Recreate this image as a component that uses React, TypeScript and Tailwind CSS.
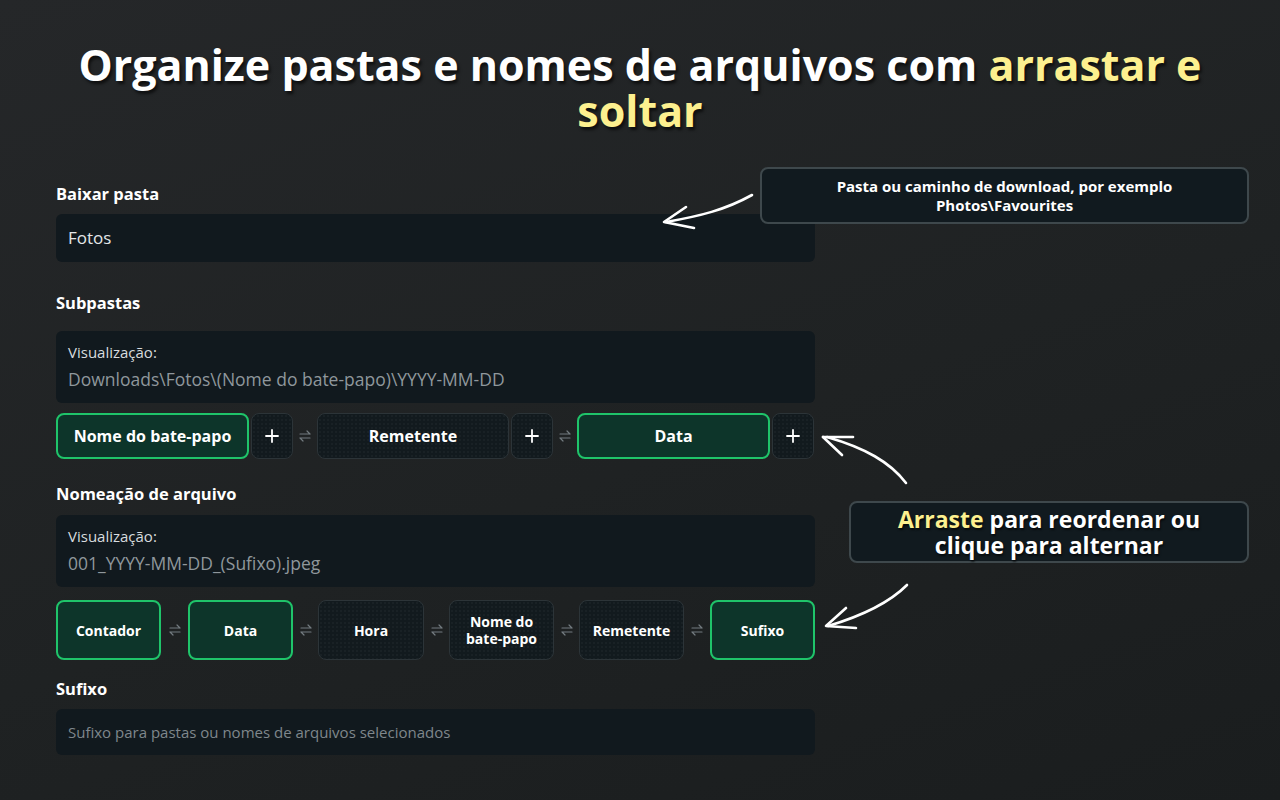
import React from "react"

const font = { fontFamily: '"Open Sans", "Noto Sans", sans-serif' }

const Swap = () => (
    <svg width="12" height="14" viewBox="0 0 12 14" fill="none" stroke="#737b80" strokeWidth="1.2" strokeLinecap="round" strokeLinejoin="round">
        <path d="M1 5h10M8 2l3 3" />
        <path d="M11 9H1M4 12L1 9" />
    </svg>
)

const Chip = ({ label, on, w, h }: { label: React.ReactNode; on?: boolean; w: string; h: string }) => (
    <div
        className={
            on
                ? `${w} ${h} flex items-center justify-center rounded-lg border-2 border-[#1fc46a] bg-[#0d352a] text-white font-bold text-center leading-[17px]`
                : `${w} ${h} flex items-center justify-center rounded-lg border border-[#2c3438] bg-[#121a1e] bg-[radial-gradient(#ffffff08_1px,transparent_1px)] bg-[size:4px_4px] text-white font-bold text-center leading-[17px]`
        }
    >
        {label}
    </div>
)

const Plus = () => (
    <div className="w-[42px] h-[46px] flex items-center justify-center rounded-lg border border-[#2c3438] bg-[#121a1e] bg-[radial-gradient(#ffffff08_1px,transparent_1px)] bg-[size:4px_4px]">
        <svg width="16" height="16" viewBox="0 0 16 16" stroke="white" strokeWidth="1.8" strokeLinecap="round">
            <path d="M8 2v12M2 8h12" />
        </svg>
    </div>
)

const Label = ({ children }: { children: React.ReactNode }) => (
    <div className="text-[16.5px] font-bold text-white leading-[22px]">{children}</div>
)

const Preview = ({ value }: { value: string }) => (
    <div className="rounded-md bg-[#11191e] px-3 pt-[10px] pb-[12px]">
        <div className="text-[15px] text-[#d8dcdf] leading-[22px]">Visualização:</div>
        <div className="text-[17.5px] text-[#8f979c] leading-[24px] mt-[4px]">{value}</div>
    </div>
)

export default function App() {
    return (
        <div
            className="relative w-[1280px] h-[800px] overflow-hidden bg-[linear-gradient(160deg,#252729_0%,#1f2223_55%,#1a1d1e_100%)]"
            style={font}
        >
            <h1 className="pt-[42px] text-center text-[43px] font-bold leading-[46px] text-white [text-shadow:2px_3px_3px_rgba(0,0,0,0.6)]">
                Organize pastas e nomes de arquivos com <span className="text-[#fdf08f]">arrastar e</span>
                <br />
                <span className="text-[#fdf08f]">soltar</span>
            </h1>

            <div className="ml-[56px] w-[759px] mt-[49px]">
                <Label>Baixar pasta</Label>
                <div className="mt-[9px] h-[48px] rounded-md bg-[#11191e] px-3 flex items-center text-[17px] text-[#e4e7e9]">
                    Fotos
                </div>

                <div className="mt-[30px]">
                    <Label>Subpastas</Label>
                </div>
                <div className="mt-[17px]">
                    <Preview value="Downloads\Fotos\(Nome do bate-papo)\YYYY-MM-DD" />
                </div>
                <div className="mt-[10px] flex items-center">
                    <Chip label="Nome do bate-papo" on w="w-[193px]" h="h-[46px]" />
                    <div className="ml-[2px]"><Plus /></div>
                    <div className="w-[24px] flex justify-center"><Swap /></div>
                    <Chip label="Remetente" w="w-[192px]" h="h-[46px]" />
                    <div className="ml-[2px]"><Plus /></div>
                    <div className="w-[24px] flex justify-center"><Swap /></div>
                    <Chip label="Data" on w="w-[193px]" h="h-[46px]" />
                    <div className="ml-[2px]"><Plus /></div>
                </div>

                <div className="mt-[24px]">
                    <Label>Nomeação de arquivo</Label>
                </div>
                <div className="mt-[10px]">
                    <Preview value="001_YYYY-MM-DD_(Sufixo).jpeg" />
                </div>
                <div className="mt-[13px] flex items-center text-[14px]">
                    <Chip label="Contador" on w="w-[105px]" h="h-[60px]" />
                    <div className="w-[27px] flex justify-center"><Swap /></div>
                    <Chip label="Data" on w="w-[105px]" h="h-[60px]" />
                    <div className="w-[25px] flex justify-center"><Swap /></div>
                    <Chip label="Hora" w="w-[106px]" h="h-[60px]" />
                    <div className="w-[25px] flex justify-center"><Swap /></div>
                    <Chip label={<span>Nome do<br />bate-papo</span>} w="w-[105px]" h="h-[60px]" />
                    <div className="w-[25px] flex justify-center"><Swap /></div>
                    <Chip label="Remetente" w="w-[105px]" h="h-[60px]" />
                    <div className="w-[26px] flex justify-center"><Swap /></div>
                    <Chip label="Sufixo" on w="w-[105px]" h="h-[60px]" />
                </div>

                <div className="mt-[18px]">
                    <Label>Sufixo</Label>
                </div>
                <div className="mt-[9px] h-[46px] rounded-md bg-[#11191e] px-3 flex items-center text-[15px] text-[#7f878c]">
                    Sufixo para pastas ou nomes de arquivos selecionados
                </div>
            </div>

            <div className="absolute left-[760px] top-[167px] w-[489px] h-[57px] rounded-lg border-2 border-[#3e484c] bg-[#111a1f] flex items-center justify-center text-center text-[15px] font-bold leading-[19px] text-white">
                <div>
                    Pasta ou caminho de download, por exemplo
                    <br />
                    Photos\Favourites
                </div>
            </div>

            <div className="absolute left-[849px] top-[501px] w-[400px] h-[62px] rounded-lg border-2 border-[#3e484c] bg-[#111a1f] flex items-center justify-center text-center text-[23px] font-bold leading-[26px] text-white [text-shadow:1px_2px_2px_rgba(0,0,0,0.6)]">
                <div>
                    <span className="text-[#fdf08f]">Arraste</span> para reordenar ou
                    <br />
                    clique para alternar
                </div>
            </div>

            <svg className="absolute inset-0 pointer-events-none" width="1280" height="800" fill="none" stroke="white" strokeWidth="2.6" strokeLinecap="round" strokeLinejoin="round">
                <path d="M752 195 C725 210 700 216 666 222" />
                <path d="M686 207 L664 222 L694 228" />
                <path d="M906 483 C890 462 865 448 827 437" />
                <path d="M823 437 L853 437" />
                <path d="M823 437 L842 455" />
                <path d="M907 585 C890 602 865 615 828 626" />
                <path d="M846 608 L826 626 L856 628" />
            </svg>
        </div>
    )
}
